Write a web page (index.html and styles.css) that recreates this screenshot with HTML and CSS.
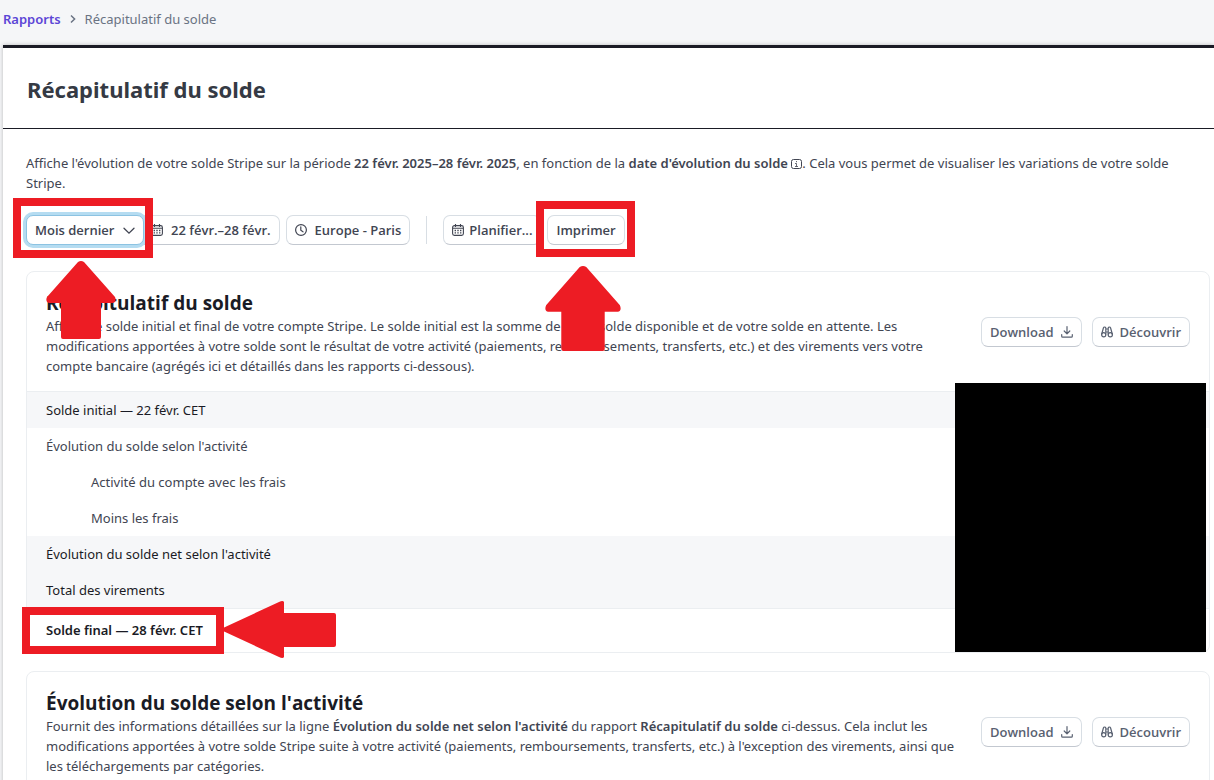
FILE: index.html
```html
<!DOCTYPE html>
<html lang="fr">
<head>
    <meta charset="UTF-8">
    <meta name="viewport" content="width=device-width, initial-scale=1.0">
    <title>Récapitulatif du solde</title>
    <link rel="stylesheet" href="styles.css">
</head>
<body>
    <!-- shared icons -->
    <svg class="sprite" aria-hidden="true">
        <symbol id="calendar" viewBox="0 0 12 12">
            <rect x="0.6" y="1.6" width="10.8" height="9.8" rx="1.8" fill="none" stroke="currentColor" stroke-width="1.1"/>
            <path d="M3.5 0v3M8.5 0v3M1 4.3h10" fill="none" stroke="currentColor" stroke-width="1.1"/>
            <path d="M2.6 6.5h6.8M2.6 8.8h6.8" fill="none" stroke="currentColor" stroke-width="1.3" stroke-dasharray="1.4 1.3"/>
        </symbol>
        <symbol id="clock" viewBox="0 0 12 12">
            <circle cx="6" cy="6" r="5.4" fill="none" stroke="currentColor" stroke-width="1.2"/>
            <path d="M5.8 2.8v3.4l2.2 1.6" fill="none" stroke="currentColor" stroke-width="1.2" stroke-linecap="round"/>
        </symbol>
        <symbol id="download" viewBox="0 0 12 12">
            <path d="M6 0.6v7M3.2 5L6 7.8 8.8 5M0.7 8.6v1.6q0 1 1 1h8.6q1 0 1-1V8.6" fill="none" stroke="currentColor" stroke-width="1.2" stroke-linecap="round" stroke-linejoin="round"/>
        </symbol>
        <symbol id="binoculars" viewBox="0 0 12 12">
            <path d="M0.6 8.5L2.4 2q0.3-1 1.2-1t1.2 1v6.5M11.4 8.5L9.6 2q-0.3-1-1.2-1t-1.2 1v6.5M4.8 3h2.4M4.8 6h2.4" fill="none" stroke="currentColor" stroke-width="1.2"/>
            <circle cx="2.7" cy="8.8" r="2.1" fill="none" stroke="currentColor" stroke-width="1.2"/>
            <circle cx="9.3" cy="8.8" r="2.1" fill="none" stroke="currentColor" stroke-width="1.2"/>
        </symbol>
        <symbol id="arrow-up" viewBox="0 0 70 78" preserveAspectRatio="none">
            <path d="M32 1q3-2 6 0l31 35q2 5-2 6H55v34q0 2-2 2H17q-2 0-2-2V42H3q-4-1-2-6z" fill="#ed1c24"/>
        </symbol>
    </svg>

    <nav class="breadcrumb" aria-label="Fil d'Ariane">
        <a href="#">Rapports</a>
        <svg width="6" height="10" viewBox="0 0 6 10" aria-hidden="true"><path d="M1 1.5L4.6 5 1 8.5" fill="none" stroke="#6a7383" stroke-width="1.5"/></svg>
        <span>Récapitulatif du solde</span>
    </nav>

    <main class="page">
        <header class="page-header">
            <h1>Récapitulatif du solde</h1>
        </header>

        <div class="content">
            <p class="intro">Affiche l'évolution de votre solde Stripe sur la période <strong>22 févr. 2025–28 févr. 2025</strong>, en fonction de la <strong>date d'évolution du solde</strong> <svg class="info" width="11" height="10" viewBox="0 0 11 10" aria-hidden="true"><rect x="0.5" y="0.5" width="10" height="9" rx="2" fill="none" stroke="currentColor"/><path d="M4 4.5h1.5V7.5M4 7.5h3M5.5 2v1.2" fill="none" stroke="currentColor" stroke-width="0.8"/></svg>. Cela vous permet de visualiser les variations de votre solde Stripe.</p>

            <div class="toolbar">
                <div class="joined">
                    <div class="period marked">
                        <select class="btn" aria-label="Période">
                            <option>Mois dernier</option>
                        </select>
                        <svg class="chevron" width="12" height="8" viewBox="0 0 12 8" aria-hidden="true"><path d="M1 1.2l5 5 5-5" fill="none" stroke="#414552" stroke-width="1.3" stroke-linecap="round"/></svg>
                        <span class="frame frame-period"></span>
                        <svg class="arrow arrow-period" aria-hidden="true"><use href="#arrow-up"/></svg>
                    </div>
                    <button type="button" class="btn btn-date"><svg class="icon"><use href="#calendar"/></svg>22 févr.–28 févr.</button>
                </div>
                <button type="button" class="btn"><svg class="icon"><use href="#clock"/></svg>Europe - Paris</button>
                <span class="divider"></span>
                <button type="button" class="btn"><svg class="icon icon-near"><use href="#calendar"/></svg>Planifier...</button>
                <div class="marked">
                    <button type="button" class="btn">Imprimer</button>
                    <span class="frame frame-print"></span>
                    <svg class="arrow arrow-print" aria-hidden="true"><use href="#arrow-up"/></svg>
                </div>
            </div>

            <section class="card">
                <div class="card-header">
                    <div class="card-text">
                        <h2>Récapitulatif du solde</h2>
                        <p>Affiche le solde initial et final de votre compte Stripe. Le solde initial est la somme de votre solde disponible et de votre solde en attente. Les modifications apportées à votre solde sont le résultat de votre activité (paiements, remboursements, transferts, etc.) et des virements vers votre compte bancaire (agrégés ici et détaillés dans les rapports ci-dessous).</p>
                    </div>
                    <div class="actions">
                        <button type="button" class="btn">Download<svg class="icon icon-end"><use href="#download"/></svg></button>
                        <button type="button" class="btn"><svg class="icon icon-start"><use href="#binoculars"/></svg>Découvrir</button>
                    </div>
                </div>
                <div class="table-wrap">
                    <table>
                        <tbody>
                            <tr class="shaded"><th scope="row">Solde initial — 22 févr. CET</th><td></td></tr>
                            <tr><th scope="row">Évolution du solde selon l'activité</th><td></td></tr>
                            <tr class="sub"><th scope="row">Activité du compte avec les frais</th><td></td></tr>
                            <tr class="sub"><th scope="row">Moins les frais</th><td></td></tr>
                            <tr class="shaded"><th scope="row">Évolution du solde net selon l'activité</th><td></td></tr>
                            <tr class="shaded"><th scope="row">Total des virements</th><td></td></tr>
                            <tr class="total">
                                <th scope="row">
                                    <span class="marked">Solde final — 28 févr. CET
                                        <span class="frame frame-total"></span>
                                        <svg class="arrow arrow-total" viewBox="0 0 114 57" preserveAspectRatio="none" aria-hidden="true"><path d="M1 27q-2 2 0 3l56 26q4 2 5 0V46h50q2 0 2-2V14q0-2-2-2H62V1q-1-2-5 0z" fill="#ed1c24"/></svg>
                                    </span>
                                </th>
                                <td></td>
                            </tr>
                        </tbody>
                    </table>
                    <div class="redacted"></div>
                </div>
            </section>

            <section class="card">
                <div class="card-header">
                    <div class="card-text">
                        <h2>Évolution du solde selon l'activité</h2>
                        <p>Fournit des informations détaillées sur la ligne <strong>Évolution du solde net selon l'activité</strong> du rapport <strong>Récapitulatif du solde</strong> ci-dessus. Cela inclut les modifications apportées à votre solde Stripe suite à votre activité (paiements, remboursements, transferts, etc.) à l'exception des virements, ainsi que les téléchargements par catégories.</p>
                    </div>
                    <div class="actions">
                        <button type="button" class="btn">Download<svg class="icon icon-end"><use href="#download"/></svg></button>
                        <button type="button" class="btn"><svg class="icon icon-start"><use href="#binoculars"/></svg>Découvrir</button>
                    </div>
                </div>
            </section>
        </div>
    </main>
</body>
</html>
```
FILE: styles.css
```css
* { box-sizing: border-box; margin: 0; padding: 0; }
body { background: #f5f6f8; color: #414552; font-family: "Segoe UI", "Noto Sans", "Open Sans", sans-serif; font-size: 13px; line-height: 20px; }
strong { font-weight: 600; }
.sprite { position: absolute; width: 0; height: 0; }

.breadcrumb { display: flex; align-items: center; gap: 9px; height: 45px; padding: 0 3px 8px; color: #6a7383; }
.breadcrumb a { color: #5b45d6; font-weight: 600; text-decoration: none; }

.page { margin-left: 3px; background: #fff; border-top: 3px solid #1a1b25; box-shadow: 0 0 4px rgba(0, 0, 0, 0.25); }
.page-header { padding: 24px 24px 22px; border-bottom: 1px solid #1a1b25; }
h1 { font-size: 22px; line-height: 34px; font-weight: 700; color: #353a44; }
h2, .btn { font-family: "Segoe UI", "Open Sans", sans-serif; }
.content { padding: 24px 4px 0 23px; }
.intro { padding-right: 8px; }
.info { vertical-align: -1px; }

.toolbar { display: flex; align-items: center; gap: 6px; margin: 22px 0 26px; }
.btn { display: inline-flex; align-items: center; height: 30px; padding: 0 8px; background: #fff; border: 1px solid #d8dee4; border-bottom-color: #c3c8d0; border-radius: 7px; color: #414552; font-size: 13px; font-weight: 600; line-height: 20px; white-space: nowrap; cursor: pointer; }
.icon { width: 12px; height: 12px; margin-right: 8px; flex: none; }
.icon-near { margin-right: 5px; }
.icon-start { margin-right: 7px; }
.icon-end { margin: 0 0 0 7px; }
.divider { width: 1px; height: 28px; margin: 0 10px; background: #d8dee4; }
.joined { display: flex; }
.btn-date { margin-left: -1px; border-left: 0; border-radius: 0 7px 7px 0; }

/* period drop-down, focused */
.period { z-index: 1; }
.period .btn { appearance: none; padding-right: 28px; border-color: #8cc3e2; box-shadow: 0 0 0 3px #b5dcf1; }
.chevron { position: absolute; right: 9px; top: 12px; pointer-events: none; }

/* red frames and arrows */
.marked { position: relative; display: flex; }
.frame { position: absolute; border: 8px solid #ed1c24; pointer-events: none; }
.frame-period { inset: -17px -9px -13px -13px; }
.frame-print { inset: -14px -10px -12px -11px; }
.frame-total { inset: -13px -21px -14px -24px; }
.arrow { position: absolute; z-index: 2; pointer-events: none; }
.arrow-period { left: 20px; top: 46px; width: 70px; height: 78px; }
.arrow-print { left: -2px; top: 51px; width: 76px; height: 85px; }
.arrow-total { left: 100%; top: -19px; width: 114px; height: 57px; margin-left: 19px; }

.card { margin-bottom: 18px; border: 1px solid #ebeef1; border-radius: 8px; }
.card-header { display: flex; align-items: center; gap: 20px; padding: 0 19px; }
.card-text { flex: 1; padding: 19px 0 15px; }
.card-text p { margin-top: 1px; }
h2 { font-size: 19px; line-height: 24px; font-weight: 700; color: #1a1b25; }
.actions { display: flex; gap: 10px; }
.actions .btn { color: #596171; }

.table-wrap { position: relative; }
table { width: 100%; border-collapse: separate; border-spacing: 0; border-top: 1px solid #ebeef1; }
th { height: 36px; padding: 0 19px; font-weight: 400; text-align: left; }
.sub th { padding-left: 64px; }
.shaded { background: #f6f7f9; }
.shaded th { color: #1a1b25; }
.total th, .total td { border-top: 1px solid #ebeef1; }
.total th { height: 44px; padding-bottom: 2px; color: #1a1b25; font-weight: 600; }
.total .marked { display: inline-block; }
.redacted { position: absolute; top: -8px; right: 3px; bottom: 0; width: 251px; background: #000; }
```
